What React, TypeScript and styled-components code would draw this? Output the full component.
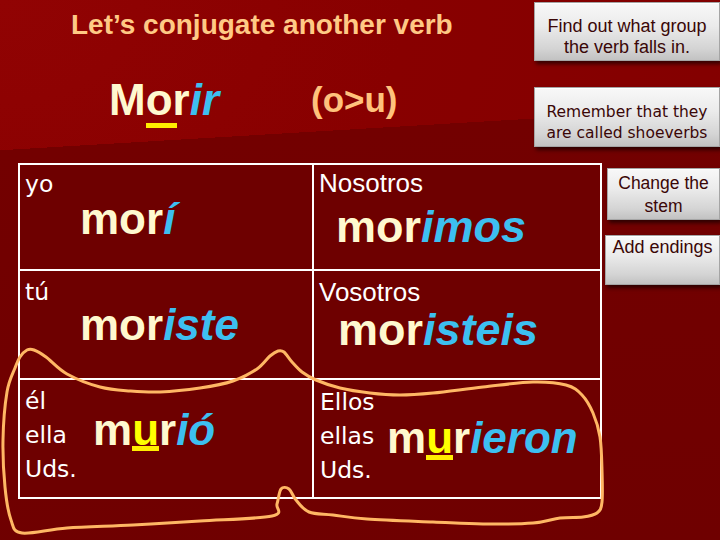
import React from "react";
import styled, { createGlobalStyle } from "styled-components";

const Global = createGlobalStyle`
  html, body { margin: 0; padding: 0; background: #700000; }
  body { width: 720px; height: 540px; overflow: hidden; }
`;

const Slide = styled.div`
  position: relative;
  width: 720px;
  height: 540px;
  overflow: hidden;
  font-family: "Liberation Sans", Arial, sans-serif;
  background:
    linear-gradient(176.6deg, rgba(112, 0, 0, 0) 0, rgba(112, 0, 0, 0) 150px, #730000 150px, #6f0000 100%),
    radial-gradient(ellipse at 0% 0%, #910303 0%, #880000 40%, #800000 100%);
`;

const Header = styled.div`
  display: grid;
  grid-template-columns: 534px 186px;
  height: 160px;
`;

const HeaderLeft = styled.div`
  display: flex;
  flex-direction: column;
`;

const Title = styled.div`
  padding: 9px 0 0 71px;
  font-weight: 700;
  font-size: 28px;
  line-height: 32px;
  color: #ffc985;
  white-space: nowrap;
`;

const VerbRow = styled.div`
  display: grid;
  grid-template-columns: 202px auto;
  align-items: start;
  padding-left: 109px;
  margin-top: 37px;
`;

const Infinitive = styled.div`
  font-weight: 700;
  font-size: 44px;
  line-height: 44px;
  white-space: nowrap;
`;

const Pattern = styled.div`
  margin-top: 0px;
  font-weight: 700;
  font-size: 35px;
  line-height: 44px;
  color: #ffc27c;
  white-space: nowrap;
`;

const ButtonColumn = styled.div<{ $pt: number; $gap: number; $ml?: number }>`
  display: flex;
  flex-direction: column;
  align-items: flex-end;
  padding-top: ${(p) => p.$pt}px;
  margin-left: ${(p) => p.$ml ?? 0}px;
  gap: ${(p) => p.$gap}px;
`;

const Button = styled.div<{
  $w: number;
  $h: number;
  $pt: number;
  $size: number;
  $lh: number;
  $tahoma?: boolean;
}>`
  box-sizing: border-box;
  width: ${(p) => p.$w}px;
  height: ${(p) => p.$h}px;
  padding-top: ${(p) => p.$pt}px;
  text-align: center;
  font-family: ${(p) => (p.$tahoma ? '"DejaVu Sans", Verdana, sans-serif' : '"Liberation Sans", Arial, sans-serif')};
  font-size: ${(p) => p.$size}px;
  line-height: ${(p) => p.$lh}px;
  color: #3a0707;
  white-space: nowrap;
  background: linear-gradient(180deg, #f8f8f8 0%, #ebebeb 40%, #d4d4d4 80%, #c2c2c2 100%);
  border: 1px solid #a5a5a5;
  box-shadow: 2px 3px 4px rgba(0, 0, 0, 0.6), inset 0 1px 0 #ffffff;
`;

const Body = styled.div`
  display: flex;
  align-items: flex-start;
  margin-top: 3px;
`;

const Table = styled.div`
  margin-left: 18px;
  display: grid;
  grid-template-columns: 292px 286px;
  grid-template-rows: 104px 107px 117px;
  gap: 2px;
  padding: 2px;
  background: #ffffff;
`;

const Cell = styled.div<{ $row?: boolean }>`
  display: flex;
  flex-direction: ${(p) => (p.$row ? "row" : "column")};
  align-items: flex-start;
  background: #6e0000;
`;

const Label = styled.div<{ $mt: number; $ml: number }>`
  margin: ${(p) => p.$mt}px 0 0 ${(p) => p.$ml}px;
  font-family: "DejaVu Sans", Verdana, sans-serif;
  font-size: 23.5px;
  line-height: 34px;
  color: #ffffff;
  white-space: nowrap;
`;

const PluralLabel = styled.div<{ $mt: number; $ml: number }>`
  margin: ${(p) => p.$mt}px 0 0 ${(p) => p.$ml}px;
  font-family: "Liberation Sans", Arial, sans-serif;
  font-size: 26px;
  line-height: 34px;
  color: #ffffff;
  white-space: nowrap;
`;

const LabelStack = styled.div<{ $mt: number; $pl: number; $w: number }>`
  box-sizing: border-box;
  display: flex;
  flex-direction: column;
  width: ${(p) => p.$w}px;
  padding-left: ${(p) => p.$pl}px;
  margin-top: ${(p) => p.$mt}px;
  font-family: "DejaVu Sans", Verdana, sans-serif;
  font-size: 23.5px;
  line-height: 34px;
  color: #ffffff;
  white-space: nowrap;
`;

const Word = styled.div<{ $mt: number; $ml: number; $size?: number }>`
  margin: ${(p) => p.$mt}px 0 0 ${(p) => p.$ml}px;
  font-weight: 700;
  font-size: ${(p) => p.$size ?? 44}px;
  line-height: ${(p) => p.$size ?? 44}px;
  white-space: nowrap;
`;

const Stem = styled.span`
  color: #fff8cf;
`;

const Ending = styled.span`
  color: #3dbff0;
  font-style: italic;
`;

const Marked = styled.span<{ $yellow?: boolean; $top: number; $extra?: number }>`
  position: relative;
  color: ${(p) => (p.$yellow ? "#ffff00" : "#fff8cf")};
  &::after {
    content: "";
    position: absolute;
    left: 0;
    top: ${(p) => p.$top}px;
    width: calc(100% + ${(p) => p.$extra ?? 0}px);
    height: 5px;
    background: #ffee00;
  }
`;

const Overlay = styled.svg`
  position: absolute;
  left: 0;
  top: 0;
  pointer-events: none;
`;

type Pt = [number, number];

function smoothClosed(pts: Pt[]): string {
  const n = pts.length;
  let d = `M ${pts[0][0]} ${pts[0][1]}`;
  for (let i = 0; i < n; i++) {
    const p0 = pts[(i - 1 + n) % n];
    const p1 = pts[i];
    const p2 = pts[(i + 1) % n];
    const p3 = pts[(i + 2) % n];
    const c1x = p1[0] + (p2[0] - p0[0]) / 6;
    const c1y = p1[1] + (p2[1] - p0[1]) / 6;
    const c2x = p2[0] - (p3[0] - p1[0]) / 6;
    const c2y = p2[1] - (p3[1] - p1[1]) / 6;
    d += ` C ${c1x.toFixed(1)} ${c1y.toFixed(1)} ${c2x.toFixed(1)} ${c2y.toFixed(1)} ${p2[0]} ${p2[1]}`;
  }
  return d + " Z";
}

const shoe: Pt[] = [
  [15, 368], [20, 357], [27, 350], [34, 350], [46, 357], [67, 374], [100, 387],
  [130, 391], [160, 392], [200, 388], [233, 381], [257, 369], [270, 356],
  [278, 351], [284, 352], [292, 362], [302, 372], [316, 380], [340, 388],
  [370, 393], [400, 395], [433, 393], [483, 387], [533, 382], [566, 385],
  [582, 395], [593, 413], [600, 437], [602, 470], [602, 502], [597, 513],
  [583, 517], [560, 518], [533, 523], [483, 524], [433, 522], [367, 519],
  [333, 515], [309, 512], [296, 500], [289, 489], [281, 489], [277, 504],
  [272, 516], [200, 521], [133, 525], [67, 528], [22, 533], [11, 520],
  [5, 487], [3, 440], [7, 392],
];

export default function App() {
  return (
    <>
      <Global />
      <Slide>
        <Header>
          <HeaderLeft>
            <Title>Let’s conjugate another verb</Title>
            <VerbRow>
              <Infinitive>
                <Stem>M</Stem>
                <Marked $top={48} $extra={4}>o</Marked>
                <Stem>r</Stem>
                <Ending>ir</Ending>
              </Infinitive>
              <Pattern>(o&gt;u)</Pattern>
            </VerbRow>
          </HeaderLeft>
          <ButtonColumn $pt={2} $gap={26}>
            <Button $w={186} $h={59} $pt={13} $size={18} $lh={21}>
              Find out what group
              <br />
              the verb falls in.
            </Button>
            <Button $w={186} $h={60} $pt={14} $size={15.5} $lh={21} $tahoma>
              Remember that they
              <br />
              are called shoeverbs
            </Button>
          </ButtonColumn>
        </Header>
        <Body>
          <Table>
            <Cell>
              <Label $mt={2} $ml={5}>yo</Label>
              <Word $mt={-4} $ml={60}>
                <Stem>mor</Stem>
                <Ending>í</Ending>
              </Word>
            </Cell>
            <Cell>
              <PluralLabel $mt={1} $ml={5}>Nosotros</PluralLabel>
              <Word $mt={4} $ml={22} $size={45}>
                <Stem>mor</Stem>
                <Ending>imos</Ending>
              </Word>
            </Cell>
            <Cell>
              <Label $mt={4} $ml={5}>tú</Label>
              <Word $mt={-6} $ml={60}>
                <Stem>mor</Stem>
                <Ending>iste</Ending>
              </Word>
            </Cell>
            <Cell>
              <PluralLabel $mt={4} $ml={5}>Vosotros</PluralLabel>
              <Word $mt={-2} $ml={24} $size={45}>
                <Stem>mor</Stem>
                <Ending>isteis</Ending>
              </Word>
            </Cell>
            <Cell $row>
              <LabelStack $mt={4} $pl={5} $w={73}>
                <span>él</span>
                <span>ella</span>
                <span>Uds.</span>
              </LabelStack>
              <Word $mt={28} $ml={0}>
                <Stem>m</Stem>
                <Marked $yellow $top={41}>u</Marked>
                <Stem>r</Stem>
                <Ending>ió</Ending>
              </Word>
            </Cell>
            <Cell $row>
              <LabelStack $mt={5} $pl={6} $w={73}>
                <span>Ellos</span>
                <span>ellas</span>
                <span>Uds.</span>
              </LabelStack>
              <Word $mt={36} $ml={0}>
                <Stem>m</Stem>
                <Marked $yellow $top={42}>u</Marked>
                <Stem>r</Stem>
                <Ending>ieron</Ending>
              </Word>
            </Cell>
          </Table>
          <ButtonColumn $pt={5} $gap={15} $ml={3}>
            <Button $w={113} $h={52} $pt={3} $size={17.5} $lh={23}>
              Change the
              <br />
              stem
            </Button>
            <Button $w={115} $h={50} $pt={1} $size={18} $lh={21}>
              Add endings
            </Button>
          </ButtonColumn>
        </Body>
        <Overlay width="720" height="540" viewBox="0 0 720 540">
          <path
            d={smoothClosed(shoe)}
            fill="none"
            stroke="#ffb764"
            strokeWidth={3}
            strokeLinejoin="round"
          />
        </Overlay>
      </Slide>
    </>
  );
}
